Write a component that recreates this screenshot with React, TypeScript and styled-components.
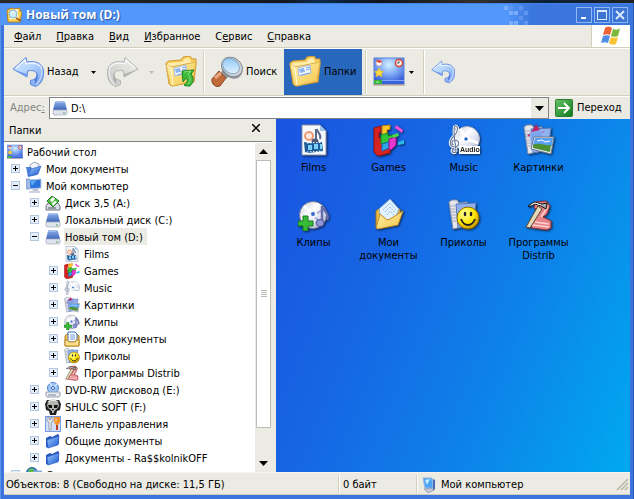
import React, { useState } from 'react';
import styled, { createGlobalStyle, css } from 'styled-components';

const FACE = '#ebeae3';
const FONT = '"DejaVu Sans Condensed", "DejaVu Sans", "Noto Sans", sans-serif';

const GlobalStyle = createGlobalStyle`
  *, *::before, *::after { box-sizing: border-box; }
  body { margin: 0; background: #12161c; font: 11px/16px ${FONT}; color: #000; }
  button, input { font: inherit; color: inherit; }
  ul { list-style: none; margin: 0; padding: 0; }
  svg { display: block; flex: none; }
`;

/* ---------- window frame ---------- */

const Desktop = styled.div`
  height: 100vh;
  padding-top: 3px;
  background: linear-gradient(90deg, #2a2a2a, #15181c 45%, #0c2a4c 50%, #10151c 60%, #33302c 75%, #0b2036 86%, #222);
`;

const Window = styled.section`
  height: 100%;
  display: flex;
  flex-direction: column;
  padding: 0 3px 4px;
  background: #3a74dc;
  border-left: 1px solid #5b93ee;
  border-right: 1px solid #2458b8;
`;

const TitleBar = styled.header`
  display: flex;
  align-items: center;
  height: 22px;
  flex: none;
  margin: 0 -3px;
  padding: 0 5px;
  gap: 4px;
  border-top: 1px solid #4382ea;
  background: linear-gradient(90deg, #5297fb 0, #5297fb 80%, #3a76dc 84%, #3a76dc 100%);
`;

const Title = styled.h1`
  margin: 0;
  flex: 1;
  font: bold 12px/20px "Open Sans", "Noto Sans", sans-serif;
  color: #fff;
  text-shadow: 1px 1px 1px #2a56a8;
`;

const Caption = styled.div`
  display: flex;
  gap: 2px;
`;

const CaptionButton = styled.button`
  display: grid;
  place-items: center;
  width: 16px;
  height: 16px;
  padding: 0;
  border: 1px solid #8db6f4;
  background: #3c74d4;
`;

const TitlePixels = styled.svg`
  margin-right: 42px;
`;

/* ---------- menu ---------- */

const MenuBar = styled.nav`
  display: flex;
  align-items: stretch;
  height: 23px;
  flex: none;
  background: ${FACE};
  border-bottom: 1px solid #d3cfbd;
`;

const MenuList = styled.ul`
  display: flex;
  flex: 1;
  gap: 15px;
  && { padding-left: 10px; }
`;

const MenuButton = styled.button`
  height: 22px;
  padding: 2px 0 0;
  border: 0;
  background: none;
`;

const Flag = styled.div`
  display: grid;
  place-items: center;
  width: 39px;
  background: #fff;
  border-left: 1px solid #d3cfbd;
`;

/* ---------- toolbar ---------- */

const ToolBar = styled.div`
  display: flex;
  align-items: center;
  height: 48px;
  flex: none;
  padding-left: 3px;
  background: ${FACE};
  border-top: 1px solid #fff;
  border-bottom: 1px solid #d3cfbd;
`;

const ToolButton = styled.button<{ $active?: boolean; $width: number }>`
  display: flex;
  align-items: center;
  gap: 3px;
  width: ${p => p.$width}px;
  height: 46px;
  padding: 0 0 0 5px;
  border: 0;
  background: ${p => (p.$active ? '#2868bc' : 'none')};
`;

const Drop = styled.button<{ $muted?: boolean }>`
  display: grid;
  place-items: center;
  width: 18px;
  height: 46px;
  padding: 0;
  border: 0;
  background: none;
  color: ${p => (p.$muted ? '#bdbcb6' : '#000')};
`;

const Divider = styled.span`
  width: 2px;
  height: 44px;
  margin: 0 1px 0 3px;
  border-left: 1px solid #d3cfbd;
  border-right: 1px solid #fff;
`;

/* ---------- address ---------- */

const AddressBar = styled.form`
  display: flex;
  align-items: center;
  height: 23px;
  flex: none;
  background: ${FACE};
  border-top: 1px solid #fff;
`;

const AddressLabel = styled.label`
  width: 45px;
  padding-left: 6px;
  color: #85857f;
`;

const AddressField = styled.div`
  display: flex;
  align-items: center;
  flex: 1;
  height: 22px;
  padding-left: 2px;
  gap: 3px;
  background: #fff;
  border: 1px solid #808080;
`;

const AddressInput = styled.input`
  flex: 1;
  min-width: 0;
  padding: 1px 0 0;
  border: 0;
  outline: 0;
  background: none;
`;

const ComboButton = styled.button`
  display: grid;
  place-items: center;
  width: 17px;
  height: 20px;
  padding: 0;
  border: 0;
  background: ${FACE};
`;

const GoButton = styled.button`
  display: flex;
  align-items: center;
  gap: 4px;
  width: 81px;
  padding: 0 0 0 6px;
  border: 0;
  background: none;
`;

/* ---------- body ---------- */

const Body = styled.main`
  display: flex;
  flex: 1;
  min-height: 0;
  background: ${FACE};
`;

const Side = styled.aside`
  display: flex;
  flex-direction: column;
  width: 268px;
  flex: none;
  margin-right: 4px;
`;

const SideHeader = styled.div`
  display: flex;
  align-items: center;
  justify-content: space-between;
  height: 23px;
  flex: none;
  padding: 2px 11px 0 5px;
  border-bottom: 1px solid #808080;
`;

const SideTitle = styled.h2`
  margin: 0;
  font: inherit;
`;

const CloseButton = styled.button`
  display: grid;
  place-items: center;
  width: 10px;
  height: 16px;
  padding: 0 0 6px;
  border: 0;
  background: none;
`;

const TreeArea = styled.div`
  display: flex;
  flex: 1;
  min-height: 0;
  padding-top: 1px;
  background: #fff;
`;

const TreeScroll = styled.div`
  flex: 1;
  min-width: 0;
  overflow: hidden;
`;

const Branch = styled.ul`
  && { padding-left: 19px; }
`;

const Row = styled.div`
  display: flex;
  align-items: center;
  height: 17px;
  line-height: 15px;
  white-space: nowrap;
`;

const Toggle = styled.button`
  display: grid;
  place-items: center;
  flex: none;
  width: 9px;
  height: 9px;
  margin: 0 3px 0 -12px;
  padding: 0;
  border: 1px solid #b4c6e0;
  background: #e4eefb;
`;

const NodeIcon = styled.span`
  flex: none;
  margin-left: 3px;
  width: 16px;
`;

const NodeLabel = styled.span<{ $selected?: boolean }>`
  padding: 2px 4px 0;
  ${p => p.$selected && css`
    margin-left: 3px;
    padding: 2px 4px 0 1px;
    background: ${FACE};
  `}
`;

const ScrollBar = styled.div`
  display: flex;
  flex-direction: column;
  width: 17px;
  background: ${FACE};
`;

const ScrollButton = styled.button`
  display: grid;
  place-items: center;
  height: 17px;
  flex: none;
  padding: 0;
  border: 0;
  background: none;
`;

const ScrollTrack = styled.div`
  flex: 1;
  padding: 0 1px;
`;

const Thumb = styled.div`
  display: grid;
  place-items: center;
  height: 91%;
  background: #fff;
  border: 1px solid #bdbcb6;
`;

const Files = styled.ul`
  flex: 1;
  display: grid;
  grid-template-columns: repeat(auto-fill, 75px);
  grid-auto-rows: 75px;
  && { padding-top: 5px; }
  background: linear-gradient(112deg, #1a54e0 0%, #1764e4 30%, #0d82e9 65%, #00a9f0 100%);
`;

const FileItem = styled.li`
  display: flex;
  flex-direction: column;
  align-items: center;
  gap: 5px;
  text-align: center;
  line-height: 13px;
  svg { filter: drop-shadow(1px 1px 1px rgba(0, 0, 0, 0.6)); }
`;

/* ---------- status ---------- */

const StatusBar = styled.footer`
  display: flex;
  align-items: center;
  height: 23px;
  flex: none;
  background: ${FACE};
  border-top: 1px solid #f5f4ef;
  border-bottom: 1px solid #cfccbc;
`;

const StatusCell = styled.div<{ $width?: number }>`
  display: flex;
  align-items: center;
  gap: 4px;
  height: 18px;
  padding: 2px 0 0 2px;
  white-space: nowrap;
  ${p => (p.$width ? css`width: ${p.$width}px; flex: none;` : css`flex: 1;`)}
  & + & {
    padding-left: 4px;
    border-left: 1px solid #d3cfbd;
    box-shadow: inset 1px 0 #fff;
  }
  & + & > svg { margin-left: 2px; }
`;

/* ---------- icons ---------- */

const Defs = () => (
  <svg width="0" height="0" aria-hidden="true">
    <defs>
      <linearGradient id="gBlue" x1="0" y1="0" x2="1" y2="1">
        <stop offset="0" stopColor="#d4e8ff" /><stop offset=".45" stopColor="#b4d4fc" /><stop offset="1" stopColor="#6f9af0" />
      </linearGradient>
      <linearGradient id="gGray" x1="0" y1="0" x2="1" y2="1">
        <stop offset="0" stopColor="#efefed" /><stop offset="1" stopColor="#c6c7c5" />
      </linearGradient>
      <linearGradient id="gYellow" x1="0" y1="0" x2="1" y2="1">
        <stop offset="0" stopColor="#fff3a8" /><stop offset="1" stopColor="#f5c44c" />
      </linearGradient>
      <linearGradient id="gFolder" x1="0" y1="0" x2="1" y2="1">
        <stop offset="0" stopColor="#9ccbff" /><stop offset="1" stopColor="#1c56d0" />
      </linearGradient>
      <linearGradient id="gDrive" x1="0" y1="0" x2="0" y2="1">
        <stop offset="0" stopColor="#8fb0e8" /><stop offset="1" stopColor="#3f68bd" />
      </linearGradient>
      <radialGradient id="gDesk" cx=".5" cy=".25" r=".75">
        <stop offset="0" stopColor="#d3f0ff" /><stop offset=".5" stopColor="#7ba6f4" /><stop offset="1" stopColor="#2b52d4" />
      </radialGradient>
      <linearGradient id="gGlass" x1="0" y1="0" x2="1" y2="1">
        <stop offset="0" stopColor="#7fc0f4" /><stop offset="1" stopColor="#f0fbff" />
      </linearGradient>
      <radialGradient id="gSmile" cx=".35" cy=".3" r=".75">
        <stop offset="0" stopColor="#ffffa0" /><stop offset=".6" stopColor="#ffe600" /><stop offset="1" stopColor="#c09000" />
      </radialGradient>
      <linearGradient id="gDisc" x1="0" y1="0" x2="1" y2="1">
        <stop offset="0" stopColor="#c4c8d8" /><stop offset=".4" stopColor="#fff" /><stop offset=".7" stopColor="#d6dbee" /><stop offset="1" stopColor="#8d93b0" />
      </linearGradient>
      <linearGradient id="gGo" x1="0" y1="0" x2="1" y2="1">
        <stop offset="0" stopColor="#68c468" /><stop offset="1" stopColor="#0b7a18" />
      </linearGradient>
    </defs>
  </svg>
);

type IconProps = { size?: number };
const Svg = ({ size = 32, box = 32, children }: IconProps & { box?: number; children: React.ReactNode }) => (
  <svg width={size} height={size} viewBox={`0 0 ${box} ${box}`} aria-hidden="true">{children}</svg>
);

const CurvedArrow = ({ size = 32, muted, flip }: IconProps & { muted?: boolean; flip?: boolean }) => (
  <Svg size={size}>
    <g transform={flip ? 'matrix(-1 0 0 1 32 0)' : undefined} strokeLinejoin="round">
      <path
        d="M1 13L14 1.500l1 4.500C24 4 31 8 31.500 15c.3 8-2 13-8 15.500l-5-2v-4c5-1 7-4 6-7-1-3-5-3.500-9-2.500L15 21z"
        fill={muted ? 'url(#gGray)' : 'url(#gBlue)'}
        stroke={muted ? '#b2b4b1' : '#5f86e0'}
      />
      <path d="M24 15c3 4 2 10-1 13v-4l-4 1c5-1 7-4 5-10z" fill={muted ? '#a9aba8' : '#4f7ae0'} />
      <path d="M1.500 13.500L15 18v3z" fill={muted ? '#b4b6b3' : '#6f9af0'} />
      <path d="M4 12l9-8 1 4c7-2 13 0 16 4" fill="none" stroke="#fff" strokeWidth="1.200" opacity=".8" />
      <path d="M29 12c2 6 0 12-5 17" fill="none" stroke="#fff" opacity=".5" strokeWidth="1.500" />
    </g>
  </Svg>
);

const FolderFace = () => (
  <g strokeLinejoin="round">
    <path d="M1 7l3-2 12-1 2-3 7-1 2 3 4 0v6l-2 17-22 4-3-2z" fill="#f9cf5c" stroke="#d09a34" />
    <path d="M3 7l15-1 1-3 5-1 2 4 4 0v4l-2 4H5z" fill="#ffeeb0" />
    <path d="M1 8l5 3 25-5-3 19-20 5-3-1z" fill="url(#gYellow)" stroke="#dfae48" />
    <path d="M2 9l4 3 2 17" fill="none" stroke="#fffbe0" />
    <path d="M9 12l12-3 1 8-12 3z" fill="#f4f9ff" stroke="#a4bce0" />
    <path d="M10 13l5-1 1 4-5 1z" fill="#8cb4f0" />
    <path d="M17 12l4-1M17 14l4-1M12 19l9-2" stroke="#7fa4e0" fill="none" />
  </g>
);
const FoldersIcon = () => <Svg><FolderFace /></Svg>;
const UpIcon = () => (
  <Svg>
    <FolderFace />
    <path d="M17 15l12-1-3 4c3 4 3 8-1 12-3 0-5 0-6-1 4-3 4-5 2-7l-3 4z" fill="#3fbb3c" stroke="#1b8422" />
    <path d="M19 16l7-1-3 3c3 4 3 7 0 10" fill="none" stroke="#8ee07c" />
  </Svg>
);

const SearchIcon = () => (
  <Svg>
    <path d="M11 15l6 6" stroke="#8f9399" strokeWidth="5" />
    <path d="M8 15l7 7-6 8c-4 2-9-2-8-7z" fill="#c06a3a" stroke="#8b4522" strokeLinejoin="round" />
    <path d="M4 22l6-5" stroke="#e8a67e" strokeWidth="3" />
    <ellipse cx="21" cy="13" rx="11" ry="9" transform="rotate(35 21 13)" fill="#8a9098" />
    <ellipse cx="21" cy="11" rx="11" ry="9" transform="rotate(35 21 11)" fill="#d0d4d9" stroke="#858b94" />
    <ellipse cx="20" cy="10" rx="9" ry="7" transform="rotate(35 20 10)" fill="url(#gGlass)" stroke="#8ba8c4" />
  </Svg>
);

const DesktopIcon = ({ size = 32 }: IconProps) => (
  <Svg size={size}>
    <rect x="1" y="2" width="30" height="27" fill="url(#gDesk)" stroke="#5c7fd8" />
    <rect x="1" y="24" width="30" height="4" fill="#3a62dc" />
    <path d="M9 24.500h22" stroke="#86a8f8" />
    <path d="M1 29h30" stroke="#f4c97c" />
    <rect x="1" y="24" width="8" height="4" fill="#35b53a" />
    <path d="M3 26h3" stroke="#c8f4b0" />
    <circle cx="6" cy="7" r="3" fill="#fff" stroke="#c8a8b4" />
    <path d="M3 5c2-2 5-1 6 1L6 7z" fill="#e0402c" />
    <circle cx="26" cy="7" r="3.500" fill="#fff" stroke="#d8402c" strokeWidth="1.500" />
    <path d="M26 5v2h-2" stroke="#444" fill="none" />
    <path d="M6 12l1.500 3 3 .5-2 2 .5 3.500-3-2-3 2 .5-3.500-2-2 3-.5z" fill="#ffd83c" stroke="#f0a81c" strokeWidth=".5" />
  </Svg>
);

const FlagIcon = () => (
  <Svg size={20} box={20}>
    <path d="M4 2c3-2 5-1 7 0l-2 7c-2-1-4-1-7 0z" fill="#ee6434" />
    <path d="M12 3c3 1 5 1 7-1l-2 8c-2 1-5 1-7 0z" fill="#7cb83c" />
    <path d="M2 10c3-1 5-1 7 0l-2 7c-2-1-5-1-7 0z" fill="#4f8ee4" />
    <path d="M10 11c2 1 5 1 7 0l-2 7c-3 1-5 1-7-1z" fill="#f8c434" />
  </Svg>
);

const TitleIcon = () => (
  <Svg size={16} box={16}>
    <path d="M1 3l5-2 2 1 6-1v3l2 1-2 10H2z" fill="#ffd45c" stroke="#b8801c" />
    <path d="M4 3l8-1v10H4z" fill="#fff8dc" />
    <path d="M10 11l5 3" stroke="#a8601c" strokeWidth="2" />
    <circle cx="7" cy="7" r="4" fill="#cceefc" stroke="#8ab4cc" />
    <path d="M5 6l3-2" stroke="#fff" strokeWidth="1.500" />
  </Svg>
);

const GoIcon = () => (
  <Svg size={18} box={18}>
    <rect x=".5" y=".5" width="17" height="17" rx="1" fill="url(#gGo)" stroke="#2c7c38" />
    <path d="M3 9h11M9 4l5 5-5 5" fill="none" stroke="#fff" strokeWidth="2" />
  </Svg>
);

const DriveIcon = ({ size = 16 }: IconProps) => (
  <Svg size={size} box={16}>
    <path d="M4 1h7l2 1 2 8H1l2-8z" fill="url(#gDrive)" />
    <path d="M4 2h7" stroke="#b8cdf3" />
    <path d="M1 10h14v4l-1 1H2l-1-1z" fill="#dfe3ee" stroke="#a2a9bb" strokeWidth=".7" />
    <path d="M11 13h2" stroke="#50a050" />
  </Svg>
);
const FloppyIcon = () => (
  <Svg size={16} box={16}>
    <path d="M3 8h10l2 3v4H1v-4z" fill="#d8dce6" stroke="#6f7686" />
    <path d="M2 6l5-5 7 5-6 6z" fill="#58b848" stroke="#1e7a26" />
    <path d="M5 5l3-3 2 2-3 3zM7 8l3-2 2 1-4 4z" fill="#fff" />
    <path d="M3 13h8" stroke="#555" />
  </Svg>
);
const DvdIcon = () => (
  <Svg size={16} box={16}>
    <circle cx="8" cy="6" r="5.500" fill="#9cc6f8" stroke="#5a86d4" />
    <path d="M8 6L5 1M8 6l4-4" stroke="#fff" />
    <circle cx="8" cy="6" r="1.500" fill="#fff" stroke="#3a62b8" />
    <path d="M1 10h14v4l-1 1H2l-1-1z" fill="#e8eaf0" stroke="#98a0b4" />
    <path d="M3 13h8" stroke="#7b8498" />
  </Svg>
);
const SkullIcon = () => (
  <Svg size={16} box={16}>
    <path d="M2 1h12l2 4-1 6-3 1-1 4H5l-1-4-3-1L0 5z" fill="#222" />
    <path d="M3 2c3-2 7-2 10 0l1 5-2 3-2 1v3H6v-3l-2-1-2-3z" fill="#b4b4b0" />
    <path d="M3 6h4v3H4zM9 6h4l-1 3H9zM7 10h2v1H7zM6 12h1v2H6zM9 12h1v2H9z" fill="#111" />
    <path d="M4 3c2-2 5-2 7-1" stroke="#f0f0ee" fill="none" />
  </Svg>
);
const PanelIcon = () => (
  <Svg size={16} box={16}>
    <rect x=".5" y=".5" width="15" height="15" fill="#cfe0fa" stroke="#7d9be0" />
    <path d="M2 2v3l2 1v8h2V6l2-1V2L6 1v3H4V1z" fill="#fff" stroke="#6f7688" strokeWidth=".7" />
    <path d="M12 8v6" stroke="#c03c28" strokeWidth="2" />
    <path d="M9 1h6v5l-2 3h-2L9 6z" fill="#f8902c" />
    <path d="M11 2v4" stroke="#fcd09c" />
  </Svg>
);
const BlueFolder = () => (
  <Svg size={16} box={16}>
    <path d="M1 5l4-2 2 1 6-3 1 1v9L3 15 1 14z" fill="#2756bc" />
    <path d="M2 7l12-4-1 9-10 3z" fill="url(#gFolder)" stroke="#2f62c8" strokeWidth=".6" />
  </Svg>
);
const BlueDocs = () => (
  <Svg size={16} box={16}>
    <path d="M4 4l4-3 5 2v7H4z" fill="#f0f2f6" stroke="#9aa3b5" />
    <path d="M0 6l5 0 1 2 5-1v7l-9 2z" fill="#4a80d8" />
    <path d="M2 15l3-7 10-3-3 8z" fill="url(#gFolder)" stroke="#2f62c8" strokeWidth=".6" />
  </Svg>
);
const ComputerIcon = () => (
  <Svg size={16} box={16}>
    <path d="M0 1h4v10H0z" fill="#9db8e8" stroke="#5f82c8" strokeWidth=".6" />
    <path d="M3 2l12-1v9L4 11z" fill="#2a72dc" stroke="#b8c8e4" />
    <path d="M4 3l7-1-5 6z" fill="#58a8f4" />
    <path d="M7 11h5l1 3H6z" fill="#bcc4d4" />
    <path d="M3 14h11" stroke="#cfd4e0" strokeWidth="2" />
  </Svg>
);
const StatusComputer = () => (
  <Svg size={16} box={16}>
    <path d="M2 1l9 0 1 10-8 0z" fill="#4aa6f4" stroke="#9ab4dc" />
    <path d="M4 3l5-1-3 6z" fill="#c4ecff" />
    <path d="M12 2l2 1v9l-2 2z" fill="#4668b8" />
    <path d="M3 12l7-1 3 2-6 3z" fill="#c3c7d8" stroke="#7c86a4" strokeWidth=".6" />
  </Svg>
);
const YellowDocs = () => (
  <Svg size={16} box={16}>
    <path d="M1 5l2-2h10l2 2v10H1z" fill="#f5c854" stroke="#ad7b1c" />
    <path d="M4 1h7l2 2v8H4z" fill="#fff" stroke="#3c70c8" />
    <path d="M6 4h5M6 6h5M6 8h5" stroke="#6fa0e4" />
    <path d="M1 9h3l1 2h6l1-2h3v6H1z" fill="#ffe08a" stroke="#b88a2c" />
  </Svg>
);
const GlobeIcon = () => (
  <Svg size={16} box={16}>
    <circle cx="6" cy="6" r="5.500" fill="#3c84dc" stroke="#235a9c" />
    <path d="M3 2l4-1 1 3-3 3-3-1z" fill="#58bc48" />
    <path d="M8 4h8v8H8z" fill="#58a4f0" stroke="#9ab0d0" />
  </Svg>
);

const FilmsIcon = ({ size = 32 }: IconProps) => (
  <Svg size={size}>
    <path d="M4 1h18l6 6v24H4z" fill="#f4f7fc" stroke="#8a93a8" />
    <path d="M22 1v6h6z" fill="#9ac4ec" />
    <circle cx="11" cy="12" r="4" fill="#ffe8dc" stroke="#ee9c78" strokeWidth="2" />
    <path d="M18 5v13M19 5c0 4 5 5 3 10" stroke="#5b6a88" strokeWidth="2" fill="none" />
    <ellipse cx="17" cy="17" rx="3.500" ry="2.500" fill="#4c5a78" />
    <path d="M6 18l5 1 13-1 1 9-14 2-4-1z" fill="#1c5c98" />
    <path d="M10 21h4v5h-4zM16 20h4v5h-4zM22 20h2v5h-2z" fill="#7cd0fa" />
    <path d="M9 19l14-.5M9 28l15-1" stroke="#fff" strokeDasharray="1.500 1.500" />
  </Svg>
);
const GamesIcon = ({ size = 32 }: IconProps) => (
  <Svg size={size}>
    <path d="M1 4l7-2v6l-2 1v5l6-1v11l5-2v7l-12 3-4-4z" fill="#d82420" stroke="#981010" />
    <path d="M9 2l8-1v4l-3 1v7l-5 1z" fill="#ffc828" stroke="#c88408" />
    <path d="M8 11l7-2v3l5-1v6l-12 3z" fill="#30c838" stroke="#108c1c" />
    <path d="M9 20l7-2v6l-7 3z" fill="#30a8e8" stroke="#106cb8" />
    <path d="M16 15l7-2v8l-5 5-2-1z" fill="#e838d0" stroke="#98108c" />
    <path d="M23 1l7 5-1 3-7-5z" fill="#f050d8" />
    <path d="M19 11l6-2 1 3-6 2z" fill="#48d848" />
    <path d="M25 18l6-2v4l-6 1z" fill="#28b8e8" />
  </Svg>
);
const MusicIcon = ({ size = 32 }: IconProps) => (
  <Svg size={size}>
    <circle cx="19" cy="15" r="12.500" fill="url(#gDisc)" stroke="#b0b4c8" />
    <path d="M19 15L12 5M19 15l11 4" stroke="#fff" strokeWidth="3" />
    <circle cx="18" cy="15" r="2.500" fill="#2468c8" stroke="#fff" strokeWidth="1.500" />
    <path d="M8 28c-3 2-5-1-3-3M7 2c4 0 3 6-1 10-5 5-5 10 0 11 6 0 6-7 1-7-3 0-4 3-2 5M7 2c-3 4 1 18 1 26" fill="none" stroke="#fff" strokeWidth="3" />
    <path d="M8 28c-3 2-5-1-3-3M7 2c4 0 3 6-1 10-5 5-5 10 0 11 6 0 6-7 1-7-3 0-4 3-2 5M7 2c-3 4 1 18 1 26" fill="none" stroke="#6d7c9c" strokeWidth="1.200" />
    <rect x="11" y="22" width="21" height="8" fill="#fff" />
    {size > 16 && <text x="12" y="28" fontFamily="Liberation Sans, sans-serif" fontWeight="bold" fontSize="7" fill="#222">Audio</text>}
  </Svg>
);
const FolderBack = () => (
  <g>
    <path d="M1 3l3-2 5 0 2 3 8-1v24l-14 3z" fill="#e4e6ec" stroke="#8a90a4" />
    <path d="M2 7h5M2 10h5M3 13h5M3 16h5M3 19h5M4 22h5" stroke="#a5abc0" />
    <path d="M8 5l20-1-3 22-15 3z" fill="#8fb2ee" stroke="#5577b8" />
  </g>
);
const PicturesIcon = ({ size = 32 }: IconProps) => (
  <Svg size={size}>
    <FolderBack />
    <path d="M13 0l3 5 5 3-5 4-2 7-4-6-6-1 5-5z" fill="#b8246c" />
    <path d="M7 9l12-3 2 18-12 3z" fill="#78a4f0" stroke="#9cb8ee" />
    <path d="M11 13l20 0-3 17-20-5z" fill="#e8ecf4" stroke="#6c7488" />
    <path d="M12 14l18 0-1 8-19-1z" fill="#58a0f4" />
    <path d="M10 21c7-3 11 1 18 0l-1 7-17-4z" fill="#4c9034" />
    <path d="M14 17l5-1 3 2 5-1" stroke="#fff" fill="none" />
  </Svg>
);
const ClipsIcon = ({ size = 32 }: IconProps) => (
  <Svg size={size}>
    <circle cx="15" cy="16" r="13.500" fill="url(#gDisc)" stroke="#777e98" />
    <path d="M15 16L6 7M15 16l4-12" stroke="#fff" strokeWidth="3" />
    <path d="M15 16l12-6M15 16l10 10" stroke="#aab0d8" strokeWidth="2" />
    <circle cx="15" cy="15" r="3" fill="#3868c8" stroke="#f4f4fc" strokeWidth="2" />
    <path d="M24 7v16M25 8c1 5 7 6 4 13" fill="none" stroke="#666eac" strokeWidth="2.500" />
    <ellipse cx="22" cy="24" rx="4" ry="3.500" fill="#8d96d8" stroke="#4c5290" />
    <path d="M5 17h5v5h5v5h-5v5H5v-5H0v-5h5z" fill="#38bc38" stroke="#147418" />
  </Svg>
);
const JokesIcon = ({ size = 32 }: IconProps) => (
  <Svg size={size}>
    <FolderBack />
    <circle cx="20" cy="19" r="11" fill="url(#gSmile)" stroke="#8a6800" />
    <ellipse cx="17" cy="15" rx="1.300" ry="2.300" fill="#222" />
    <ellipse cx="23" cy="15" rx="1.300" ry="2.300" fill="#222" />
    <path d="M13 20c3 8 11 8 14 0" stroke="#222" strokeWidth="1.800" fill="none" />
  </Svg>
);
const DistribIcon = ({ size = 32 }: IconProps) => (
  <Svg size={size}>
    <path d="M12 3l11-1 4 5-3 8-4 3 8 4v7l-4 2-15-2-2-4 8-9 2-5-6-2z" fill="#e48488" stroke="#8c3038" />
    <path d="M9 26l17 2M12 23l14 2M23 5l1 4-6 9" stroke="#ffd0d0" strokeWidth="1.500" fill="none" />
    <path d="M15 7l4 3L7 29l-4-1z" fill="#e4d8bc" stroke="#5c4828" />
    <path d="M5 7l6-4 8 2 5-1-1 6-5-3-6-2-6 3z" fill="#a8b0b4" stroke="#111" />
    <path d="M8 6l4-2 6 2" stroke="#fff" fill="none" />
  </Svg>
);
const OpenFolderIcon = () => (
  <Svg>
    <path d="M3 12l4-3 5 2 15-1v8L5 29l-2-1z" fill="#edbd4c" stroke="#a87c1c" />
    <path d="M6 10L17 0l9 10-6 14-12-3z" fill="#e4f2fe" stroke="#82acd8" />
    <path d="M10 11l7-7 6 7M12 13l5-5 5 6M14 16l3-4 4 4" stroke="#8dbcf0" fill="none" strokeDasharray="2 1" />
    <path d="M3 29l4-14 7 6 3-1 13-8-5 14-20 4z" fill="url(#gYellow)" stroke="#c08c24" />
  </Svg>
);

const Arrow = ({ up, small }: { up?: boolean; small?: boolean }) => (
  <svg width={small ? 5 : 9} height={small ? 3 : 5} viewBox="0 0 9 5" aria-hidden="true">
    <path d={up ? 'M0 5h9L4.500 0z' : 'M0 0h9L4.500 5z'} fill="currentColor" />
  </svg>
);

/* ---------- data ---------- */

type TreeNode = {
  label: string;
  icon: React.ReactNode;
  open?: boolean;
  leaf?: boolean;
  selected?: boolean;
  children?: TreeNode[];
};

const drive: TreeNode[] = [
  { label: 'Films', icon: <FilmsIcon size={16} />, leaf: true },
  { label: 'Games', icon: <GamesIcon size={16} /> },
  { label: 'Music', icon: <MusicIcon size={16} /> },
  { label: 'Картинки', icon: <PicturesIcon size={16} /> },
  { label: 'Клипы', icon: <ClipsIcon size={16} /> },
  { label: 'Мои документы', icon: <YellowDocs /> },
  { label: 'Приколы', icon: <JokesIcon size={16} /> },
  { label: 'Программы Distrib', icon: <DistribIcon size={16} /> },
];

const computer: TreeNode[] = [
  { label: 'Диск 3,5 (A:)', icon: <FloppyIcon /> },
  { label: 'Локальный диск (C:)', icon: <DriveIcon /> },
  { label: 'Новый том (D:)', icon: <DriveIcon />, open: true, selected: true, children: drive },
  { label: 'DVD-RW дисковод (E:)', icon: <DvdIcon /> },
  { label: 'SHULC SOFT (F:)', icon: <SkullIcon /> },
  { label: 'Панель управления', icon: <PanelIcon /> },
  { label: 'Общие документы', icon: <BlueFolder /> },
  { label: 'Документы - Ra$$kolnikOFF', icon: <BlueFolder /> },
];

const root: TreeNode = {
  label: 'Рабочий стол',
  icon: <DesktopIcon size={16} />,
  open: true,
  leaf: true,
  children: [
    { label: 'Мои документы', icon: <BlueDocs /> },
    { label: 'Мой компьютер', icon: <ComputerIcon />, open: true, children: computer },
    { label: 'Сетевое окружение', icon: <GlobeIcon /> },
  ],
};

const files: [string, React.ReactNode][] = [
  ['Films', <FilmsIcon />],
  ['Games', <GamesIcon />],
  ['Music', <MusicIcon />],
  ['Картинки', <PicturesIcon />],
  ['Клипы', <ClipsIcon />],
  ['Мои документы', <OpenFolderIcon />],
  ['Приколы', <JokesIcon />],
  ['Программы Distrib', <DistribIcon />],
];

const menus: [string, string, string][] = [
  ['', 'Ф', 'айл'],
  ['', 'П', 'равка'],
  ['', 'В', 'ид'],
  ['', 'И', 'збранное'],
  ['С', 'е', 'рвис'],
  ['', 'С', 'правка'],
];

const TreeItem = ({ node }: { node: TreeNode }) => {
  const [open, setOpen] = useState(!!node.open);
  return (
    <li>
      <Row>
        {!node.leaf && (
          <Toggle type="button" aria-expanded={open} aria-label={node.label} onClick={() => setOpen(!open)}>
            <svg width="7" height="7" viewBox="0 0 7 7" shapeRendering="crispEdges" aria-hidden="true">
              <path d={open ? 'M1 3h5v1H1z' : 'M1 3h5v1H1zM3 1h1v5H3z'} fill="#000" />
            </svg>
          </Toggle>
        )}
        <NodeIcon>{node.icon}</NodeIcon>
        <NodeLabel $selected={node.selected}>{node.label}</NodeLabel>
      </Row>
      {open && node.children && (
        <Branch>{node.children.map(c => <TreeItem key={c.label} node={c} />)}</Branch>
      )}
    </li>
  );
};

export default function App() {
  const [path, setPath] = useState('D:\\');
  return (
    <Desktop>
      <GlobalStyle />
      <Window>
        <TitleBar>
          <TitleIcon />
          <Title>Новый том (D:)</Title>
          <TitlePixels width="26" height="20" viewBox="0 0 26 20" shapeRendering="crispEdges" aria-hidden="true">
            <path d="M0 1h4v4H0zM5 6h4v4H5zM10 6h4v4h-4zM5 16h4v4H5zM10 16h4v4h-4z" fill="#79adfb" />
            <path d="M15 1h4v4h-4zM20 6h4v4h-4zM15 11h4v4h-4zM20 16h4v4h-4zM5 1h4v4H5z" fill="#5e95f0" />
          </TitlePixels>
          <Caption>
            <CaptionButton type="button" aria-label="Свернуть">
              <svg width="10" height="10" viewBox="0 0 10 10"><path d="M2 8h5" stroke="#fff" strokeWidth="2" /></svg>
            </CaptionButton>
            <CaptionButton type="button" aria-label="Развернуть">
              <svg width="10" height="10" viewBox="0 0 10 10" shapeRendering="crispEdges"><path d="M0 0h10v10H0zM1 2v7h8V2z" fillRule="evenodd" fill="#dbe8fd" /></svg>
            </CaptionButton>
            <CaptionButton type="button" aria-label="Закрыть">
              <svg width="10" height="10" viewBox="0 0 10 10"><path d="M1 1l8 8M9 1l-8 8" stroke="#dbe8fd" strokeWidth="2" /></svg>
            </CaptionButton>
          </Caption>
        </TitleBar>

        <MenuBar>
          <MenuList>
            {menus.map(([a, key, b]) => (
              <li key={a + key + b}><MenuButton type="button">{a}<u>{key}</u>{b}</MenuButton></li>
            ))}
          </MenuList>
          <Flag><FlagIcon /></Flag>
        </MenuBar>

        <ToolBar>
          <ToolButton type="button" $width={77}><CurvedArrow />Назад</ToolButton>
          <Drop type="button" aria-label="Журнал назад"><Arrow small /></Drop>
          <ToolButton type="button" $width={40} aria-label="Вперед"><CurvedArrow muted flip /></ToolButton>
          <Drop type="button" $muted aria-label="Журнал вперед"><Arrow small /></Drop>
          <ToolButton type="button" $width={40} aria-label="Вверх"><UpIcon /></ToolButton>
          <Divider />
          <ToolButton type="button" $width={78}><SearchIcon />Поиск</ToolButton>
          <ToolButton type="button" $width={78} $active><FoldersIcon />Папки</ToolButton>
          <Divider />
          <ToolButton type="button" $width={34} aria-label="Вид"><DesktopIcon /></ToolButton>
          <Drop type="button" aria-label="Варианты вида"><Arrow small /></Drop>
          <Divider />
          <ToolButton type="button" $width={40} aria-label="Отменить"><CurvedArrow size={24} /></ToolButton>
        </ToolBar>

        <AddressBar onSubmit={e => e.preventDefault()}>
          <AddressLabel htmlFor="address">Адрес<u>:</u></AddressLabel>
          <AddressField>
            <DriveIcon />
            <AddressInput id="address" value={path} onChange={e => setPath(e.target.value)} />
            <ComboButton type="button" aria-label="Список адресов"><Arrow /></ComboButton>
          </AddressField>
          <GoButton type="submit"><GoIcon />Переход</GoButton>
        </AddressBar>

        <Body>
          <Side>
            <SideHeader>
              <SideTitle>Папки</SideTitle>
              <CloseButton type="button" aria-label="Закрыть панель">
                <svg width="8" height="8" viewBox="0 0 8 8"><path d="M0 0l8 8M8 0L0 8" stroke="#000" strokeWidth="1.500" /></svg>
              </CloseButton>
            </SideHeader>
            <TreeArea>
              <TreeScroll>
                <ul><TreeItem node={root} /></ul>
              </TreeScroll>
              <ScrollBar>
                <ScrollButton type="button" aria-label="Прокрутить вверх"><Arrow up /></ScrollButton>
                <ScrollTrack>
                  <Thumb>
                    <svg width="6" height="8" viewBox="0 0 6 8" shapeRendering="crispEdges" aria-hidden="true">
                      <path d="M0 0h6v1H0zM0 2h6v1H0zM0 4h6v1H0zM0 6h6v1H0z" fill="#bdbcb6" />
                    </svg>
                  </Thumb>
                </ScrollTrack>
                <ScrollButton type="button" aria-label="Прокрутить вниз"><Arrow /></ScrollButton>
              </ScrollBar>
            </TreeArea>
          </Side>
          <Files>
            {files.map(([name, icon]) => <FileItem key={name}>{icon}<span>{name}</span></FileItem>)}
          </Files>
        </Body>

        <StatusBar>
          <StatusCell $width={334}>Объектов: 8 (Свободно на диске: 11,5 ГБ)</StatusCell>
          <StatusCell $width={78}>0 байт</StatusCell>
          <StatusCell><StatusComputer />Мой компьютер</StatusCell>
          <svg width="14" height="14" viewBox="0 0 14 14" aria-hidden="true">
            <path d="M1 13L12 2M5 13l7-7M9 13l3-3" stroke="#b8b5a4" strokeWidth="1.500" />
          </svg>
        </StatusBar>
      </Window>
      <Defs />
    </Desktop>
  );
}
